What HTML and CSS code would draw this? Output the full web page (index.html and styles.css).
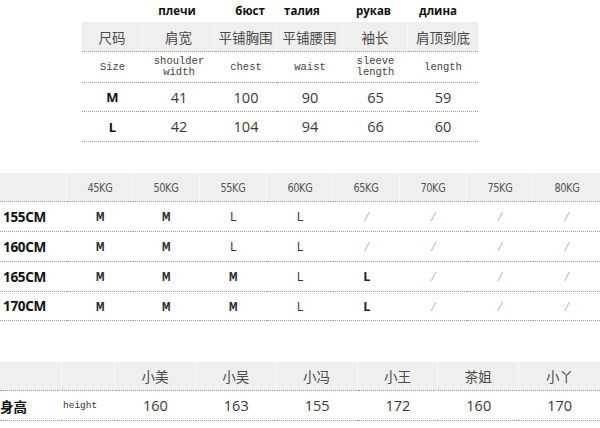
FILE: index.html
```html
<!DOCTYPE html>
<html lang="zh">
<head>
<meta charset="utf-8">
<link rel="stylesheet" href="styles.css">
</head>
<body>
<div class="page">
  <section class="top">
    <div class="ru-row">
      <span></span>
      <span class="ru ru1">плечи</span>
      <span class="ru ru2">бюст</span>
      <span class="ru ru3">талия</span>
      <span class="ru ru4">рукав</span>
      <span class="ru ru5">длина</span>
    </div>
    <div class="grid t1 head">
      <div class="c cn">尺码</div>
      <div class="c cn">肩宽</div>
      <div class="c cn">平铺胸围</div>
      <div class="c cn">平铺腰围</div>
      <div class="c cn">袖长</div>
      <div class="c cn">肩顶到底</div>
    </div>
    <div class="grid t1 en-row">
      <div class="c mono">Size</div>
      <div class="c mono">shoulder<br>width</div>
      <div class="c mono">chest</div>
      <div class="c mono">waist</div>
      <div class="c mono">sleeve<br>length</div>
      <div class="c mono">length</div>
    </div>
    <div class="grid t1 val-row">
      <div class="c size">M</div>
      <div class="c num">41</div>
      <div class="c num">100</div>
      <div class="c num">90</div>
      <div class="c num">65</div>
      <div class="c num">59</div>
    </div>
    <div class="grid t1 val-row">
      <div class="c size">L</div>
      <div class="c num">42</div>
      <div class="c num">104</div>
      <div class="c num">94</div>
      <div class="c num">66</div>
      <div class="c num">60</div>
    </div>
  </section>

  <section class="mid">
    <div class="grid t2 head">
      <div class="c"></div>
      <div class="c kg"><span>45KG</span></div>
      <div class="c kg"><span>50KG</span></div>
      <div class="c kg"><span>55KG</span></div>
      <div class="c kg"><span>60KG</span></div>
      <div class="c kg"><span>65KG</span></div>
      <div class="c kg"><span>70KG</span></div>
      <div class="c kg"><span>75KG</span></div>
      <div class="c kg"><span>80KG</span></div>
    </div>
    <div class="grid t2 row">
      <div class="c cm">155CM</div>
      <div class="c m"><span>M</span></div><div class="c m"><span>M</span></div><div class="c l">L</div><div class="c l">L</div>
      <div class="c sl">/</div><div class="c sl">/</div><div class="c sl">/</div><div class="c sl">/</div>
    </div>
    <div class="grid t2 row">
      <div class="c cm">160CM</div>
      <div class="c m"><span>M</span></div><div class="c m"><span>M</span></div><div class="c l">L</div><div class="c l">L</div>
      <div class="c sl">/</div><div class="c sl">/</div><div class="c sl">/</div><div class="c sl">/</div>
    </div>
    <div class="grid t2 row">
      <div class="c cm">165CM</div>
      <div class="c m"><span>M</span></div><div class="c m"><span>M</span></div><div class="c m"><span>M</span></div><div class="c l">L</div>
      <div class="c lb">L</div><div class="c sl">/</div><div class="c sl">/</div><div class="c sl">/</div>
    </div>
    <div class="grid t2 row">
      <div class="c cm">170CM</div>
      <div class="c m"><span>M</span></div><div class="c m"><span>M</span></div><div class="c m"><span>M</span></div><div class="c l">L</div>
      <div class="c lb">L</div><div class="c sl">/</div><div class="c sl">/</div><div class="c sl">/</div>
    </div>
  </section>

  <section class="bot">
    <div class="grid t3 head">
      <div class="c"></div>
      <div class="c"></div>
      <div class="c cn">小美</div>
      <div class="c cn">小吴</div>
      <div class="c cn">小冯</div>
      <div class="c cn">小王</div>
      <div class="c cn">茶姐</div>
      <div class="c cn">小丫</div>
    </div>
    <div class="grid t3 row">
      <div class="c hb">身高</div>
      <div class="c hmono">height</div>
      <div class="c num">160</div>
      <div class="c num">163</div>
      <div class="c num">155</div>
      <div class="c num">172</div>
      <div class="c num">160</div>
      <div class="c num">170</div>
    </div>
  </section>
</div>
</body>
</html>
```

FILE: styles.css
```css
* { box-sizing: border-box; }
html, body { margin: 0; padding: 0; background: #fff; }
body {
  width: 600px;
  height: 428px;
  overflow: hidden;
  font-family: "Liberation Sans", "Noto Sans CJK SC", sans-serif;
  color: #333;
}
.page { display: flex; flex-direction: column; }

.grid { display: grid; }
.c {
  display: flex;
  align-items: center;
  justify-content: center;
  text-align: center;
  border-bottom: 1px dotted #9a9a9a;
}
.head { background: #efefef; }
.head .c { border-right: 1px solid #f8f8f8; }
.head .c:last-child { border-right: none; }

/* top table */
.top { margin-left: 82px; width: 396px; }
.t1 { grid-template-columns: 61px 72px 62px 66px 65px 70px; }
.ru-row {
  display: grid;
  grid-template-columns: 61px 72px 62px 66px 65px 70px;
  height: 22px;
  align-items: center;
}
.ru {
  font-family: "Open Sans", "DejaVu Sans", sans-serif;
  font-weight: 700;
  font-size: 11.5px;
  color: #111;
  text-align: center;
  line-height: 14px;
}
.ru1 { margin-left: -4px; }
.ru2 { margin-left: 8px; }
.ru3 { margin-right: 16px; }
.ru4 { margin-left: -4px; }
.ru5 { margin-right: 10px; }
.t1.head .c { height: 30px; }
.cn {
  font-family: "Noto Sans CJK SC", sans-serif;
  font-size: 13.5px;
  color: #4a4a4a;
}
.en-row .c { height: 31px; }
.mono {
  font-family: "Liberation Mono", "DejaVu Sans Mono", monospace;
  font-size: 10.5px;
  line-height: 11px;
  color: #444;
}
.val-row .c { height: 29px; }
.val-row + .val-row .c { height: 30px; }
.size {
  font-family: "Open Sans", sans-serif;
  font-weight: 700;
  font-size: 13px;
  color: #111;
}
.num {
  font-family: "Open Sans", sans-serif;
  font-size: 14.5px;
  color: #3a3a3a;
}

/* middle table */
.mid { margin-top: 31px; }
.t2 { grid-template-columns: repeat(9, 1fr); }
.t2.head .c { height: 29px; }
.t2.row .c { height: 30px; }
.t2.row:last-child .c { height: 29px; }
.kg span {
  display: inline-block;
  font-family: "DejaVu Sans", sans-serif;
  font-size: 12.5px;
  letter-spacing: -0.5px;
  color: #555;
  transform: scaleX(0.78);
}
.cm {
  justify-content: flex-start;
  padding-left: 3px;
  font-family: "Open Sans", sans-serif;
  font-weight: 700;
  font-size: 13.5px;
  color: #111;
  letter-spacing: -0.3px;
}
.m span {
  display: inline-block;
  font-family: "DejaVu Sans", sans-serif;
  font-weight: 700;
  font-size: 12.5px;
  color: #333;
  transform: scaleX(0.72);
}
.l {
  font-family: "Open Sans", sans-serif;
  font-size: 12.5px;
  color: #333;
}
.lb {
  font-family: "Open Sans", sans-serif;
  font-weight: 700;
  font-size: 12.5px;
  color: #222;
}
.sl {
  font-family: "Open Sans", sans-serif;
  font-weight: 300;
  font-size: 12px;
  color: #888;
  font-style: italic;
}

/* bottom table */
.bot { margin-top: 41px; }
.t3 { grid-template-columns: 62px 53px repeat(6, 1fr); }
.t3.head .c { height: 29px; }
.t3.row .c { height: 30px; }
.hb {
  justify-content: flex-start;
  font-family: "Noto Sans CJK SC", sans-serif;
  font-weight: 700;
  font-size: 13.5px;
  color: #111;
}
.hmono {
  justify-content: flex-start;
  padding-left: 1px;
  font-family: "Liberation Mono", monospace;
  font-size: 9.5px;
  color: #333;
}
```
